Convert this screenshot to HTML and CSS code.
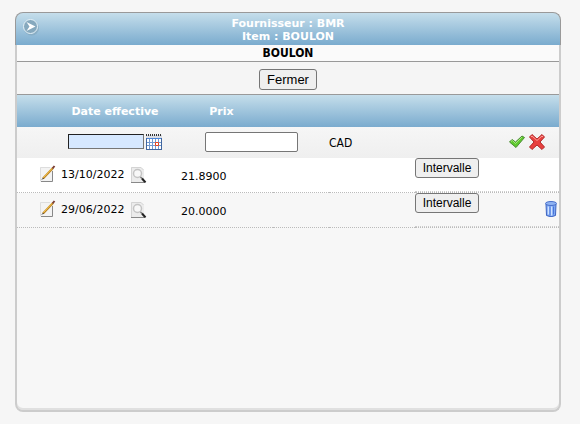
FILE: index.html
```html
<!DOCTYPE html>
<html lang="fr">
<head>
    <meta charset="UTF-8">
    <meta name="viewport" content="width=device-width, initial-scale=1.0">
    <title>Fournisseur : BMR</title>
    <link rel="stylesheet" href="styles.css">
</head>
<body>
    <div class="panel">
        <div class="panel-header">
            <button type="button" class="icon-button toggle" aria-label="Menu">
                <svg width="18" height="18" viewBox="0 0 18 18">
                    <circle cx="9.500" cy="10" r="7.500" fill="#7d9fb4" opacity=".5"/>
                    <circle cx="8.500" cy="8.500" r="7" fill="#86a9be" stroke="#e6f2f8"/>
                    <path d="M4.500 4 13.500 8.500 4.500 13 7.500 8.500z" fill="#fff"/>
                </svg>
            </button>
            <div>Fournisseur : BMR</div>
            <div>Item : BOULON</div>
        </div>
        <div class="panel-body">
            <div class="item-name">BOULON</div>
            <div class="toolbar"><button type="button" class="btn btn-close">Fermer</button></div>

            <table class="prices">
                <colgroup>
                    <col class="col-edit">
                    <col class="col-date">
                    <col class="col-price">
                    <col class="col-gap">
                    <col class="col-currency">
                    <col>
                </colgroup>
                <thead>
                    <tr>
                        <th></th>
                        <th id="dateHead">Date effective</th>
                        <th id="priceHead">Prix</th>
                        <th></th>
                        <th></th>
                        <th></th>
                    </tr>
                </thead>
                <tbody>
                    <tr class="form-row">
                        <td></td>
                        <td>
                            <div class="date-field">
                                <input type="text" class="date-input" aria-labelledby="dateHead">
                                <button type="button" class="icon-button" aria-label="Calendrier">
                                    <svg width="16" height="16" viewBox="0 0 16 16">
                                        <path d="M0 2h16v14H0z" fill="#41669f"/>
                                        <path d="M1 5h14v10H1z" fill="#fff"/>
                                        <path d="M0 1h16v3H0z" fill="#d8dce4"/>
                                        <path d="M0 1h16" stroke="#333" stroke-width="2" stroke-dasharray="1 1"/>
                                        <path d="M1 4.500h14" stroke="#4c86d8"/>
                                        <path d="M1 8.500h14M1 11.500h14M3.500 5v10M6.500 5v10M9.500 5v10M12.500 5v10" stroke="#7099d0"/>
                                        <path d="M9.500 8.500h3v3h-3z" fill="#fff" stroke="#e8431c"/>
                                    </svg>
                                </button>
                            </div>
                        </td>
                        <td colspan="2" class="price-cell"><input type="text" class="price-input" aria-labelledby="priceHead"></td>
                        <td class="currency">CAD</td>
                        <td>
                            <div class="form-actions">
                                <button type="button" class="icon-button" aria-label="Enregistrer">
                                    <svg width="16" height="16" viewBox="0 0 16 16">
                                        <path d="M.500 8 3 5.500 6.500 8 13 2l2.500 1.500L7 13.500z" fill="#5fc92f" stroke="#4b8b35"/>
                                        <path d="M2 7.500 3.500 6.500l3 3L13 3" fill="none" stroke="#a5ea7c"/>
                                    </svg>
                                </button>
                                <button type="button" class="icon-button" aria-label="Annuler">
                                    <svg width="16" height="16" viewBox="0 0 16 16">
                                        <path d="M.500 3 3 .500 8 5l5-4.500L15.500 3 11 8l4.500 5-2.500 2.500L8 11l-5 4.500L.500 13 5 8z" fill="#e8413f" stroke="#b02c2c"/>
                                        <path d="M2 3 3 2l5 4.500L13 2l1 1" fill="none" stroke="#ff9a94"/>
                                    </svg>
                                </button>
                            </div>
                        </td>
                    </tr>
                    <tr class="data-row">
                        <td><button type="button" class="icon-button edit" aria-label="Modifier"><svg width="16" height="18" viewBox="0 0 16 18"><use href="#iconEdit"/></svg></button></td>
                        <td>
                            <div class="date-value">13/10/2022
                                <button type="button" class="icon-button" aria-label="Consulter"><svg width="16" height="16" viewBox="0 0 16 16"><use href="#iconView"/></svg></button>
                            </div>
                        </td>
                        <td class="price">21.8900</td>
                        <td></td>
                        <td></td>
                        <td><div class="row-actions"><button type="button" class="btn">Intervalle</button></div></td>
                    </tr>
                    <tr class="data-row alt">
                        <td><button type="button" class="icon-button edit" aria-label="Modifier"><svg width="16" height="18" viewBox="0 0 16 18"><use href="#iconEdit"/></svg></button></td>
                        <td>
                            <div class="date-value">29/06/2022
                                <button type="button" class="icon-button" aria-label="Consulter"><svg width="16" height="16" viewBox="0 0 16 16"><use href="#iconView"/></svg></button>
                            </div>
                        </td>
                        <td class="price">20.0000</td>
                        <td></td>
                        <td></td>
                        <td>
                            <div class="row-actions">
                                <button type="button" class="btn">Intervalle</button>
                                <button type="button" class="icon-button delete" aria-label="Supprimer">
                                    <svg width="12" height="16" viewBox="0 0 12 16">
                                        <path d="M1 3h10l-.500 11.500Q6 17 1.500 14.500z" fill="#7fa9f4" stroke="#3d63c0"/>
                                        <path d="M3.500 5.500v8M6.500 5.500v9" stroke="#cfe2ff" stroke-width="1.500"/>
                                        <path d="M5 5.500v9M8.500 5.500v8" stroke="#4a76d8"/>
                                        <ellipse cx="6" cy="2.500" rx="5.500" ry="2" fill="#8fb3f2" stroke="#4a70cb"/>
                                    </svg>
                                </button>
                            </div>
                        </td>
                    </tr>
                </tbody>
            </table>
        </div>
    </div>

    <!-- icons shared by the rows -->
    <svg class="sprite" width="0" height="0">
        <symbol id="iconEdit" viewBox="0 0 16 18">
            <path d="M0 2h13v15H0z" fill="#f3f3f3"/>
            <path d="M.500 16V2.500H10" fill="none" stroke="#ddd"/>
            <path d="M1 16.500h11.500V6" fill="none" stroke="#888"/>
            <path d="M3 13.500 13 3" stroke="#b98224" stroke-width="2"/>
            <path d="M3.500 12.500 12.500 3" stroke="#f8c548"/>
            <path d="M12.500 3.500l2-2.500" stroke="#7b3f35" stroke-width="2"/>
            <path d="M2 14.500l1.500-1.500" stroke="#222"/>
        </symbol>
        <symbol id="iconView" viewBox="0 0 16 16">
            <path d="M0 0h10l3 3v12H0z" fill="#ececec"/>
            <path d="M.500 15V.500H10l2.500 2.500" fill="none" stroke="#d4d4d4"/>
            <path d="M0 15.500h13" stroke="#888"/>
            <circle cx="6.500" cy="6.500" r="4" fill="#f8f8f8" stroke="#c4c4c4" stroke-width="1.500"/>
            <path d="M9.500 10l1.500 1.500" stroke="#777" stroke-width="1.500"/>
            <path d="M11 11.500l3.500 4" stroke="#222" stroke-width="2"/>
        </symbol>
    </svg>
</body>
</html>
```
FILE: styles.css
```css
* {
    box-sizing: border-box;
}
body {
    margin: 0;
    padding: 12px 19px 12px 15px;
    min-height: 100vh;
    display: flex;
    background: #f6f6f6;
    color: #000;
    font-family: Verdana, "DejaVu Sans", sans-serif;
    font-size: 11px;
    line-height: 13px;
}
.panel {
    flex: 1;
    display: flex;
    flex-direction: column;
}
.panel-header {
    position: relative;
    padding: 4px 0 2px;
    border: 1px solid #999;
    border-bottom: 0;
    border-radius: 8px 8px 0 0;
    background: linear-gradient(#c5deeb, #7aabce);
    color: #fff;
    font-weight: bold;
    text-align: center;
}
.toggle {
    position: absolute;
    left: 6px;
    top: 5px;
}
.panel-body {
    flex: 1;
    border: 2px solid #ccc;
    border-top: 0;
    border-radius: 0 0 8px 8px;
    background: #f7f7f7;
    box-shadow: inset 0 -2px #e0e0e0;
}
.item-name {
    height: 17px;
    border-bottom: 1px solid #999;
    background: #fafafa;
    font-family: Tahoma, "DejaVu Sans Condensed", sans-serif;
    font-size: 12px;
    font-weight: bold;
    line-height: 16px;
    text-align: center;
}
.toolbar {
    display: flex;
    justify-content: center;
    align-items: center;
    height: 33px;
    padding-top: 2px;
    border-bottom: 1px solid #999;
    background: #f5f5f5;
}
.btn {
    width: 64px;
    height: 20px;
    padding: 0;
    border: 1px solid #767676;
    border-radius: 3px;
    background: #efefef;
    color: #000;
    font-family: Arial, "Liberation Sans", sans-serif;
    font-size: 12px;
}
.btn-close {
    width: 58px;
    height: 21px;
    font-size: 13px;
}
.icon-button {
    padding: 0;
    border: 0;
    background: none;
}
.icon-button svg {
    display: block;
}
.prices {
    width: 100%;
    table-layout: fixed;
    border-collapse: separate;
    border-spacing: 0;
}
.prices th,
.prices td {
    padding: 0;
}
.col-edit {
    width: 43px;
}
.col-date {
    width: 110px;
}
.col-price {
    width: 103px;
}
.col-gap {
    width: 56px;
}
.col-currency {
    width: 86px;
}
.prices thead tr {
    height: 32px;
    background: linear-gradient(#c5deeb, #7aabce);
    color: #fff;
}
.form-row {
    height: 31px;
    background: linear-gradient(#f6f6f6, #efefef);
}
.prices .form-row td {
    padding-bottom: 2px;
}
.date-field {
    display: flex;
    justify-content: center;
    gap: 2px;
}
.date-input {
    width: 76px;
    height: 15px;
    padding: 0 2px;
    border: 1px solid #767676;
    border-top-color: #222;
    border-left-color: #222;
    background: #d6e8ff;
    font: inherit;
}
.prices .price-cell {
    padding-left: 35px;
}
.price-input {
    display: block;
    width: 93px;
    height: 20px;
    padding: 0 2px;
    border: 1px solid #767676;
    border-radius: 2px;
    background: #fff;
    font: inherit;
}
.prices .form-row .currency {
    padding: 2px 0 0;
    font-family: Tahoma, "DejaVu Sans Condensed", sans-serif;
    font-size: 12px;
}
.form-actions {
    display: flex;
    justify-content: flex-end;
    gap: 4px;
    padding-right: 14px;
}
.data-row {
    height: 35px;
    background: #fff;
}
.data-row.alt {
    background: #f7f7f7;
}
.data-row td {
    border-bottom: 1px dotted #bbb;
    vertical-align: top;
}
.edit {
    margin: 7px 0 0 23px;
}
.date-value {
    display: flex;
    gap: 7px;
    padding: 9px 0 0 1px;
    line-height: 15px;
}
.data-row .price {
    padding: 12px 0 0 11px;
}
.row-actions {
    display: flex;
    justify-content: space-between;
    align-items: flex-start;
    height: 34px;
    border-bottom: 1px dotted #ccc;
}
.delete {
    margin: 8px 2px 0 0;
}
.sprite {
    position: absolute;
}
```
